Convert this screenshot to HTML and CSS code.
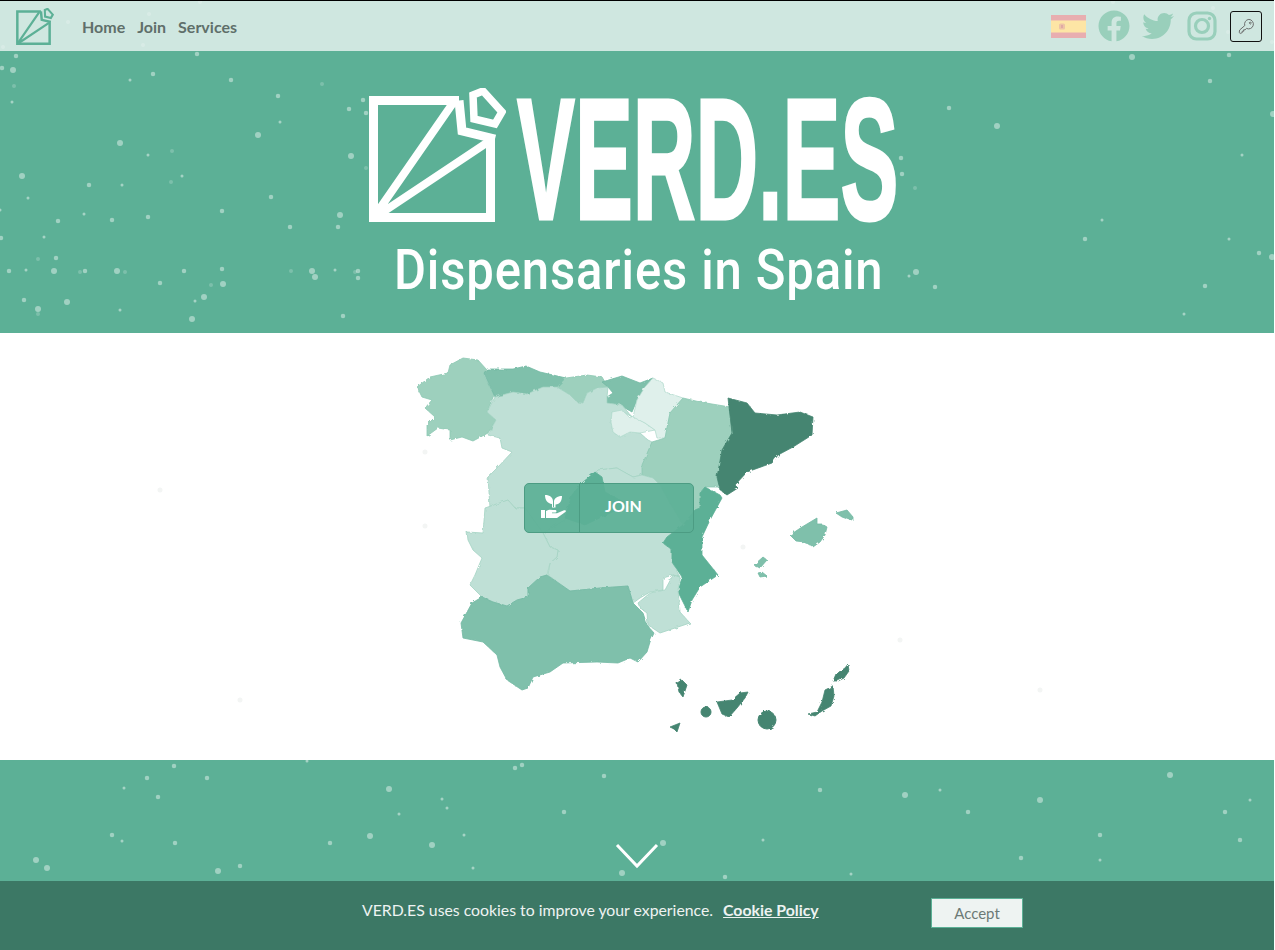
FILE: index.html
```html
<!DOCTYPE html>
<html lang="en">
<head>
  <meta charset="UTF-8" />
  <title>VERD.ES - Dispensaries in Spain</title>
  <link rel="stylesheet" href="styles.css">
</head>
<body>
  <svg class="sprites" width="0" height="0">
    <symbol id="logo" viewBox="369 88 137 134">
      <g fill="none" stroke="currentColor" stroke-width="9" stroke-miterlimit="10">
        <path d="M459 100.500H373.500V217.500H490.500V135M459 100.500L462 131L495 139"/>
        <path stroke-width="8" d="M376 214L453 103M380 214L488 142"/>
        <path stroke-width="7.500" d="M473 95L483 91L502 112L495 124L474 119Z"/>
      </g>
    </symbol>
  </svg>

  <svg class="particles" viewBox="0 0 1274 950">
    <path class="big" d="M13 70h.01M120 143h.01M258 135h.01M351 156h.01M54 271h.01M117 271h.01M67 302h.01M204 297h.01M192 319h.01M223 284h.01M38 309h.01M315 277h.01M312 271h.01M340 215h.01M22 176h.01M997 126h.01M916 272h.01M1132 57h.01M1272 257h.01M1273 114h.01M389 789h.01M370 836h.01M432 845h.01M36 860h.01M47 868h.01M218 871h.01M622 873h.01M663 843h.01M1170 775h.01M1040 800h.01M905 795h.01"/>
    <path class="mid" d="M16 56h.01M2 68h.01M153 74h.01M197 54h.01M231 80h.01M278 96h.01M349 109h.01M363 100h.01M366 113h.01M89 185h.01M112 220h.01M148 217h.01M271 197h.01M222 211h.01M58 221h.01M290 227h.01M338 227h.01M56 258h.01M9 271h.01M85 271h.01M184 271h.01M222 269h.01M160 283h.01M24 300h.01M343 316h.01M358 278h.01M358 271h.01M1 238h.01M949 108h.01M1210 81h.01M1229 55h.01M901 158h.01M902 174h.01M935 287h.01M1259 253h.01M1205 286h.01M1085 239h.01M174 766h.01M147 778h.01M207 778h.01M158 797h.01M112 835h.01M175 843h.01M330 843h.01M240 866h.01M564 812h.01M515 768h.01M604 776h.01M522 765h.01M725 877h.01M1021 858h.01M968 812h.01M1225 812h.01M1100 835h.01M1240 840h.01M820 790h.01"/>
    <path class="small" d="M130 80h.01M12 102h.01M280 122h.01M148 155h.01M122 185h.01M182 176h.01M28 198h.01M84 214h.01M44 237h.01M26 270h.01M195 301h.01M120 310h.01M335 270h.01M0 210h.01M1242 155h.01M1102 220h.01M1229 239h.01M1184 314h.01M909 276h.01M124 788h.01M442 799h.01M447 808h.01M399 814h.01M122 841h.01M464 835h.01M307 761h.01M473 868h.01M763 840h.01M851 874h.01M1100 860h.01M940 790h.01M1250 800h.01"/>
    <path class="faint" d="M322 84h.01M14 86h.01M172 151h.01M171 182h.01M366 168h.01M38 259h.01M80 272h.01M125 272h.01M291 271h.01M211 285h.01M38 314h.01M355 272h.01M915 188h.01M149 14h.01M68 22h.01M3 47h.01M143 45h.01M200 2h.01M1213 8h.01M1113 2h.01M1272 42h.01M1228 32h.01"/>
    <path class="grey" d="M425 452h.01M425 526h.01M160 490h.01M743 547h.01M1040 690h.01M240 700h.01M900 640h.01"/>
  </svg>

  <header class="topbar">
    <svg class="topbar-logo"><use href="#logo"/></svg>
    <nav class="menu">
      <a href="#">Home</a>
      <a href="#">Join</a>
      <a href="#">Services</a>
    </nav>
    <div class="social">
      <svg class="flag" viewBox="0 0 35 23">
        <rect width="35" height="23" fill="#e8aeb0"/>
        <rect y="5.500" width="35" height="12" fill="#fde5a5"/>
        <rect x="8" y="8.500" width="6" height="6" rx="1.500" fill="#edc3a6"/>
        <rect x="10" y="10" width="2" height="3" fill="#e0a9a4"/>
      </svg>
      <svg class="fb" viewBox="0 0 512 512"><path d="M504 256C504 119 393 8 256 8S8 119 8 256c0 123.780 90.690 226.380 209.250 245V327.690h-63V256h63v-54.640c0-62.150 37-96.480 93.670-96.480 27.140 0 55.520 4.840 55.520 4.840v61h-31.280c-30.800 0-40.410 19.120-40.410 38.730V256h68.780l-11 71.690h-57.780V501C413.310 482.380 504 379.780 504 256z"/></svg>
      <svg class="tw" viewBox="0 0 512 512"><path d="M459.370 151.716c.325 4.548.325 9.097.325 13.645 0 138.720-105.583 298.558-298.558 298.558-59.452 0-114.680-17.219-161.137-47.106 8.447.974 16.568 1.299 25.340 1.299 49.055 0 94.213-16.568 130.274-44.832-46.132-.975-84.792-31.188-98.112-72.772 6.498.974 12.995 1.624 19.818 1.624 9.421 0 18.843-1.300 27.614-3.573-48.081-9.747-84.143-51.980-84.143-102.985v-1.299c13.969 7.797 30.214 12.670 47.431 13.319-28.264-18.843-46.781-51.005-46.781-87.391 0-19.492 5.197-37.360 14.294-52.954 51.655 63.675 129.300 105.258 216.365 109.807-1.624-7.797-2.599-15.918-2.599-24.040 0-57.828 46.782-104.934 104.934-104.934 30.213 0 57.502 12.670 76.670 33.137 23.715-4.548 46.456-13.320 66.599-25.340-7.798 24.366-24.366 44.833-46.132 57.827 21.117-2.273 41.584-8.122 60.426-16.243-14.292 20.791-32.161 39.308-52.628 54.253z"/></svg>
      <svg class="ig" viewBox="0 0 30 30">
        <rect x="2" y="2" width="26" height="26" rx="7.500"/>
        <circle cx="15" cy="15" r="6.500"/>
        <circle class="ig-dot" cx="22.500" cy="7.500" r="1.700"/>
      </svg>
      <a class="login" href="#">
        <svg viewBox="0 0 20 20"><path d="M12.500 2.500a5 5 0 0 1 4.500 6.500a5 5 0 0 1-7 3l-1.500 1.500h-1.500v1.500h-1.500v1.500l-2.200.8-1-1 .5-2.600 5.400-4.700a5 5 0 0 1 4.300-6.500zM14 5.500a.9.9 0 1 0 .01 0z"/></svg>
      </a>
    </div>
  </header>

  <section class="hero">
    <div class="brand">
      <svg class="brand-logo"><use href="#logo"/></svg>
      <h1 class="brand-name"><span>VERD.ES</span></h1>
    </div>
    <p class="tagline"><span>Dispensaries in Spain</span></p>
  </section>

  <section class="map-section">
    <div class="map-wrap">
      <svg class="map" viewBox="412 350 450 390">
        <defs>
          <filter id="rough" x="-5%" y="-5%" width="110%" height="110%">
            <feTurbulence type="fractalNoise" baseFrequency="0.22" numOctaves="2" seed="4"/>
            <feDisplacementMap in="SourceGraphic" scale="3"/>
          </filter>
        </defs>
        <g filter="url(#rough)">
          <polygon class="tone2" points="417,387 430,377 448,373 450,365 463,358 478,360 487,370 484,375 494,395 487,412 496,420 488,433 473,441 462,437 450,440 450,430 438,428 427,436 427,425 435,417 425,408 432,400 422,397"/>
          <polygon class="tone3" points="484,373 487,369 513,369 526,366 540,372 566,378 557,387 543,387 527,394 513,392 495,397"/>
          <polygon class="tone2" points="566,378 587,375 602,377 608,387 597,388 587,393 583,403 577,402 570,395 557,387"/>
          <polygon class="tone3" points="602,382 622,376 640,383 653,378 645,387 637,400 632,412 623,407 622,405 607,403 607,397 613,393 608,387"/>
          <polygon class="tone1" points="495,397 513,392 527,394 543,387 557,387 570,395 577,402 583,403 587,393 597,388 608,387 607,397 607,403 622,405 632,417 622,411 612,412 611,422 613,432 620,437 630,432 640,433 648,440 652,442 645,460 642,475 633,477 620,470 617,468 598,470 595,473 582,483 572,495 565,520 543,533 525,508 515,508 508,500 490,508 488,477 498,467 512,452 502,448 500,438 488,435 496,420 487,412"/>
          <polygon class="tone0" points="612,412 622,410 630,418 633,416 645,423 655,430 640,433 630,432 620,437 613,432 611,422"/>
          <polygon class="tone0" points="653,378 663,383 665,392 683,398 670,413 665,438 657,438 655,430 645,423 633,417 637,400 645,387"/>
          <polygon class="tone2" points="683,398 700,402 730,407 732,433 722,450 718,487 705,487 700,493 700,508 695,510 683,525 668,500 660,485 653,478 642,475 642,465 652,442 665,438 670,413"/>
          <polygon class="tone4" points="728,398 747,403 755,413 777,415 800,412 813,417 812,435 793,447 778,455 772,463 747,472 735,485 738,488 727,495 720,490 717,477 722,450 732,433"/>
          <polygon class="tone1" points="595,473 598,470 617,468 633,477 642,475 653,478 660,485 668,500 683,525 667,537 663,543 672,550 672,562 680,577 673,575 663,578 663,590 650,592 640,598 633,603 628,586 600,588 570,591 548,575 550,563 557,557 558,550 550,547 543,533 565,520 572,495 582,483"/>
          <polygon class="tone3b" points="595,472 602,477 605,492 620,500 630,505 612,512 585,525 565,518 572,495 582,483"/>
          <polygon class="tone3b" points="705,487 720,495 722,498 710,520 702,537 702,555 718,575 700,587 692,600 688,612 678,592 682,577 672,562 672,550 663,543 667,537 683,525 695,510 700,508 700,493"/>
          <polygon class="tone1" points="467,532 483,533 485,508 508,500 515,508 525,508 543,533 550,547 558,550 557,557 550,563 547,575 540,577 528,588 528,597 517,600 507,606 493,602 482,597 470,585 475,575 482,558 473,550 468,540"/>
          <polygon class="tone3" points="547,575 570,591 600,588 628,586 633,603 643,613 647,625 654,633 650,642 647,652 638,662 630,658 618,663 597,662 563,663 550,672 533,677 528,688 522,690 507,680 500,667 497,655 483,642 463,638 461,623 472,603 482,597 493,602 507,606 517,600 528,597 528,588 540,577"/>
          <polygon class="tone1" points="638,603 650,593 665,590 673,575 680,577 678,590 680,612 690,623 660,633 648,625 647,613 640,608"/>
          <polygon class="tone3" points="790,535 802,527 817,518 817,524 822,524 827,527 825,535 820,542 813,547 805,542 796,541"/>
          <polygon class="tone3" points="836,513 847,510 853,517 853,521 842,517"/>
          <polygon class="tone3" points="754,565 763,557 767,560 760,568"/>
          <polygon class="tone3" points="758,573 762,572 767,576 760,577"/>
          <polygon class="tone4" points="677,683 682,680 687,685 683,697 679,692"/>
          <polygon class="tone4" points="670,727 680,723 677,732 674,729"/>
          <circle class="tone4" cx="706" cy="712" r="5"/>
          <polygon class="tone4" points="717,702 732,700 740,693 748,692 745,698 737,708 729,717 722,714"/>
          <circle class="tone4" cx="767" cy="720" r="9"/>
          <polygon class="tone4" points="808,714 817,712 822,702 825,690 833,686 834,696 831,706 822,711 815,716"/>
          <polygon class="tone4" points="833,681 836,674 845,668 848,664 849,671 844,678 838,681"/>
        </g>
      </svg>
      <a class="join" href="#">
        <span class="join-icon">
          <svg viewBox="0 0 26 24"><path d="M4 0c5 0 8 2.500 8 6.500V12h1V6.500c0-3 3-5.500 8-5.500 0 5-2 8-6.500 8.500v3H11V9C6.500 8.500 4 5 4 0zM0 15h4v8H0zM5 16c3-2 6-1 9-1 2 0 2 2.500 0 2.500h-3v.8h5l7-3c2-.5 2.500 1 1 2l-8 5.700H5z"/></svg>
        </span>
        <span class="join-label">JOIN</span>
      </a>
    </div>
  </section>

  <section class="more">
    <svg class="chevron" viewBox="0 0 44 26"><path d="M2 2l20 21L42 2"/></svg>
  </section>

  <div class="cookie-bar">
    <p>VERD.ES uses cookies to improve your experience. <a href="#">Cookie Policy</a></p>
    <button>Accept</button>
  </div>
</body>
</html>
```

FILE: styles.css
```css
:root {
  --green: #5cb096;
  --pale: #cfe7e0;
  --dark: #3c7865;
}
html, body {
  margin: 0; padding: 0;
  height: 950px; overflow: hidden;
  font-family: Lato, sans-serif;
  background: #fff;
}
body { position: relative; width: 1274px; border-top: 1px solid #000; box-sizing: border-box; }
a { text-decoration: none; color: inherit; }

.sprites { position: absolute; }
.particles {
  position: absolute; left: 0; top: -1px; width: 1274px; height: 950px;
  z-index: 2; pointer-events: none;
  fill: none; stroke: #fff; stroke-linecap: round;
}
.particles .big { stroke-width: 6; opacity: .42; }
.particles .mid { stroke-width: 4.500; opacity: .42; }
.particles .small { stroke-width: 3; opacity: .45; }
.particles .faint { stroke-width: 4; opacity: .2; }
.particles .grey { stroke-width: 5; stroke: #f3f5f4; }

.topbar {
  height: 50px; background: var(--pale);
  display: flex; align-items: center;
  padding: 0 12px 0 16px;
}
.topbar-logo { width: 38px; height: 37px; color: var(--green); flex: none; }
.menu { display: flex; gap: 12px; margin-left: 28px; font-size: 16px; font-weight: 700; color: #5f6f6a; }
.social { margin-left: auto; display: flex; align-items: center; }
.social svg { display: block; }
.flag { width: 35px; height: 23px; }
.fb { width: 32px; height: 32px; margin-left: 12px; fill: #99cfbb; }
.tw { width: 32px; height: 32px; margin-left: 12px; fill: #99cfbb; }
.ig { width: 30px; height: 30px; margin-left: 13px; fill: none; stroke: #99cfbb; stroke-width: 3.200; }
.ig-dot { fill: #99cfbb; stroke: none; }
.login {
  width: 30px; height: 29px; margin-left: 13px;
  border: 1px solid #111; border-radius: 3px;
  display: flex; align-items: center; justify-content: center;
}
.login svg { width: 19px; height: 19px; fill: none; stroke: #666; stroke-width: 1; }

.hero { height: 282px; background: var(--green); color: #fff; overflow: hidden; box-sizing: border-box; padding-top: 37px; }
.brand { width: 536px; margin: 0 auto; display: flex; }
.brand-logo { width: 137px; height: 134px; flex: none; }
.brand-name {
  margin: 9px 0 0 11px; width: 383px; height: 125px;
  font: 700 172px/125px "Liberation Sans", sans-serif;
}
.brand-name span {
  display: inline-block; white-space: nowrap;
  transform: scaleX(.505); transform-origin: 0 0;
  -webkit-text-stroke: 3px #fff;
}
.tagline {
  margin: 18px 0 0; text-align: center;
  font: 500 56px/60px Roboto, sans-serif;
  padding-left: 4px;
}
.tagline span { display: inline-block; transform: scaleX(.875); white-space: nowrap; letter-spacing: 1px; }

.map-section { height: 427px; background: #fff; box-sizing: border-box; padding-top: 17px; }
.map-wrap { position: relative; width: 450px; height: 390px; margin: 0 auto; }
.map { display: block; width: 450px; height: 390px; }
.map polygon { stroke-width: .8; stroke-linejoin: round; }
.tone0 { fill: #dff0eb; stroke: #b5dccf; }
.tone1 { fill: #bfe0d6; stroke: #a3d3c3; }
.tone2 { fill: #9dd0bd; stroke: #8bc8b3; }
.tone3 { fill: #7fc0ab; stroke: #72b9a3; }
.tone3b { fill: #5cb096; stroke: #5cb096; }
.tone4 { fill: #458571; stroke: #458571; }

.join {
  position: absolute; left: 112px; top: 133px;
  width: 170px; height: 50px; box-sizing: border-box;
  display: flex; color: #fff;
  background: rgba(92, 176, 150, .92);
  border: 1px solid #4c9c83; border-radius: 5px;
  font-size: 16px; font-weight: 700;
}
.join-icon {
  width: 54px; border-right: 1px solid #4c9c83;
  display: flex; align-items: center; justify-content: center;
}
.join-icon svg { width: 26px; height: 24px; fill: #fff; margin: -2px 0 0 4px; }
.join-label { flex: 1; display: flex; align-items: center; justify-content: center; padding: 0 26px 6px 0; }

.more { height: 190px; background: var(--green); display: flex; justify-content: center; }
.chevron { width: 44px; height: 26px; margin-top: 83px; fill: none; stroke: #fff; stroke-width: 3; }

.cookie-bar {
  position: fixed; left: 0; bottom: 0; width: 1274px; height: 69px;
  background: var(--dark); color: #eef3f2; z-index: 3;
  font-size: 15.800px;
}
.cookie-bar p { position: absolute; left: 362px; top: 19px; margin: 0; line-height: 20px; }
.cookie-bar a { font-weight: 700; text-decoration: underline; margin-left: 6px; }
.cookie-bar button {
  position: absolute; left: 931px; top: 17px; width: 92px; height: 30px;
  background: #eef3f2; color: #6c7a76; border: 1px solid var(--green);
  font: 15px Lato, sans-serif;
}
```
